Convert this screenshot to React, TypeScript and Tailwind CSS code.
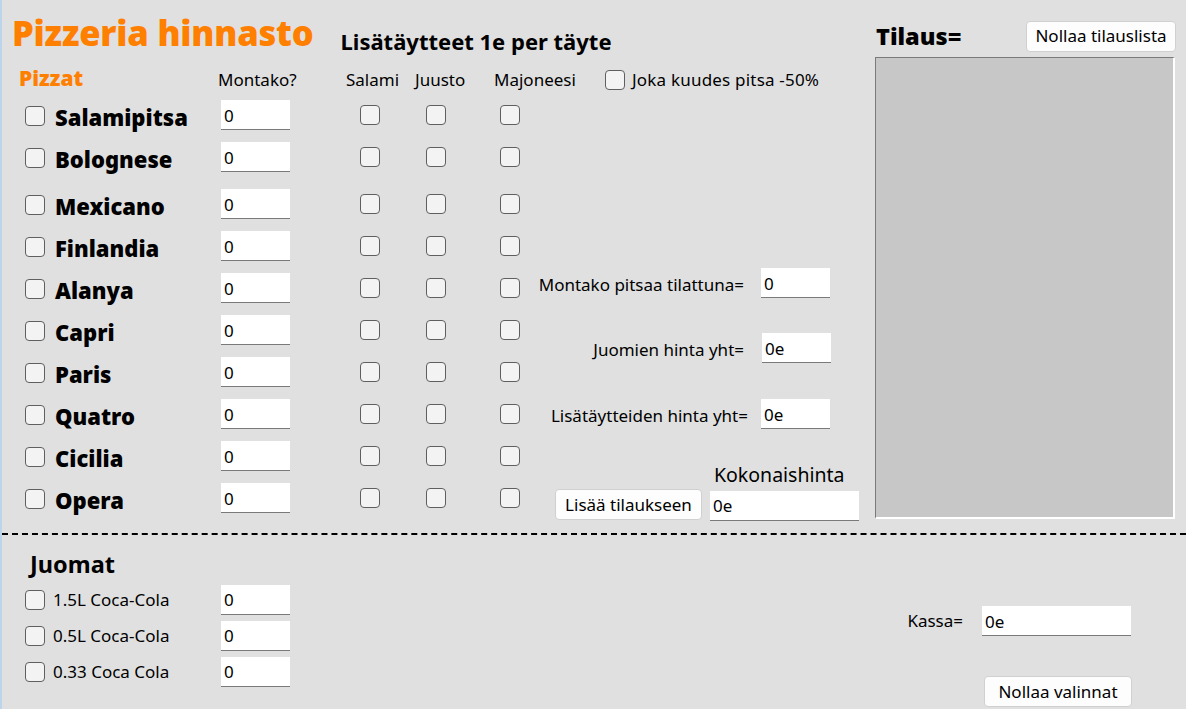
import React from "react";

const F = { fontFamily: '"Noto Sans", "Open Sans", sans-serif' };

function Cb() {
  return <div className="w-5 h-5 rounded-[4px] border border-[#5f5f5f] bg-[#f3f3f3] shrink-0" />;
}

function Tb({ v, w = "w-[69px]" }: { v: string; w?: string }) {
  return (
    <div className={`${w} h-[30px] bg-white border-b border-[#7a7a7a] shrink-0 flex items-center pl-[3px] pt-[2px] text-[17px] text-black`}>
      {v}
    </div>
  );
}

function Btn({ t, w }: { t: string; w: string }) {
  return (
    <div className={`${w} h-[31px] bg-[#fdfdfd] border border-[#d0d0d0] rounded-[4px] flex items-center justify-center text-[17px] text-black shrink-0`}>
      {t}
    </div>
  );
}

const pizzas = ["Salamipitsa", "Bolognese", "Mexicano", "Finlandia", "Alanya", "Capri", "Paris", "Quatro", "Cicilia", "Opera"];

export default function App() {
  return (
    <div className="w-[1186px] h-[709px] bg-[#e0e0e0] border-l-2 border-[#bcd4ec] overflow-hidden text-black" style={F}>
      {/* top */}
      <div className="h-[533px] flex">
        <div className="w-[873px] shrink-0 flex flex-col">
          <div className="flex items-end h-[54px]">
            <div className="ml-[10px] text-[34.5px] font-black text-[#ff7f00] leading-none mb-[4px] tracking-[-0.2px]">Pizzeria hinnasto</div>
            <div className="ml-[27px] text-[22px] font-bold leading-none mb-[2px]">Lisätäytteet 1e per täyte</div>
          </div>
          <div className="flex items-center h-[46px] pt-[6px]">
            <div className="ml-[17px] w-[199px] text-[21px] font-black text-[#ff7f00] -mt-[4px] leading-none">Pizzat</div>
            <div className="text-[17px] w-[128px]">Montako?</div>
            <div className="text-[17px] w-[69px]">Salami</div>
            <div className="text-[17px] w-[79px]">Juusto</div>
            <div className="text-[17px] w-[111px]">Majoneesi</div>
            <Cb />
            <div className="text-[17px] ml-[7px] tracking-[0.2px]">Joka kuudes pitsa -50%</div>
          </div>
          <div className="flex">
            <div className="flex flex-col">
              {pizzas.map((p, i) => (
                <div key={p} className={`flex items-center h-[30px] ${i === 0 ? "" : i === 2 ? "mt-[17px]" : "mt-[12px]"}`}>
                  <div className="ml-[23px] mt-[2px]"><Cb /></div>
                  <div className="ml-[10px] w-[166px] text-[22px] font-black leading-none mt-[4px]">{p}</div>
                  <Tb v="0" />
                  <div className="ml-[70px]"><Cb /></div>
                  <div className="ml-[46px]"><Cb /></div>
                  <div className="ml-[54px]"><Cb /></div>
                </div>
              ))}
            </div>
            <div className="flex flex-col ml-[10px] pt-[168px] w-[330px]">
              <div className="flex items-center h-[30px]">
                <div className="w-[214px] text-right text-[17px] mt-[3px]">Montako pitsaa tilattuna=</div>
                <div className="ml-[17px]"><Tb v="0" /></div>
              </div>
              <div className="flex items-center h-[30px] mt-[35px]">
                <div className="w-[214px] text-right text-[17px] mt-[3px]">Juomien hinta yht=</div>
                <div className="ml-[18px]"><Tb v="0e" /></div>
              </div>
              <div className="flex items-center h-[30px] mt-[36px]">
                <div className="w-[218px] text-right text-[17px] mt-[3px]">Lisätäytteiden hinta yht=</div>
                <div className="ml-[13px]"><Tb v="0e" /></div>
              </div>
              <div className="ml-[184px] mt-[36px] text-[19.5px] leading-none">Kokonaishinta</div>
              <div className="flex items-center mt-[4px]">
                <div className="ml-[25px]"><Btn t="Lisää tilaukseen" w="w-[147px]" /></div>
                <div className="ml-[8px] mt-[2px]"><Tb v="0e" w="w-[149px]" /></div>
              </div>
            </div>
          </div>
        </div>
        <div className="flex flex-col flex-1">
          <div className="flex items-center h-[56px]">
            <div className="text-[23.5px] font-black leading-none mt-[18px] ml-[1px]">Tilaus=</div>
            <div className="ml-auto mr-[10px] mt-[16px]"><Btn t="Nollaa tilauslista" w="w-[150px]" /></div>
          </div>
          <div className="mt-[1px] w-[300px] h-[462px] bg-[#c7c7c7] border-t border-l border-[#7a7a7a] border-b-2 border-r-2 border-b-white border-r-white" />
        </div>
      </div>
      {/* dashed */}
      <div className="border-t-2 border-dashed border-black" />
      {/* bottom */}
      <div className="flex">
        <div className="flex flex-col">
          <div className="ml-[28px] mt-[18px] text-[23.5px] font-bold leading-none">Juomat</div>
          {["1.5L Coca-Cola", "0.5L Coca-Cola", "0.33 Coca Cola"].map((d, i) => (
            <div key={d} className={`flex items-center h-[30px] ${i === 0 ? "mt-[8px]" : "mt-[6px]"}`}>
              <div className="ml-[23px]"><Cb /></div>
              <div className="ml-[8px] w-[168px] text-[17px]">{d}</div>
              <Tb v="0" />
            </div>
          ))}
        </div>
        <div className="ml-auto mr-[55px] flex flex-col items-end pt-[71px]">
          <div className="flex items-center">
            <div className="text-[17px] mr-[19px]">Kassa=</div>
            <Tb v="0e" w="w-[149px]" />
          </div>
          <div className="mt-[40px] mr-[-1px]"><Btn t="Nollaa valinnat" w="w-[148px]" /></div>
        </div>
      </div>
    </div>
  );
}
